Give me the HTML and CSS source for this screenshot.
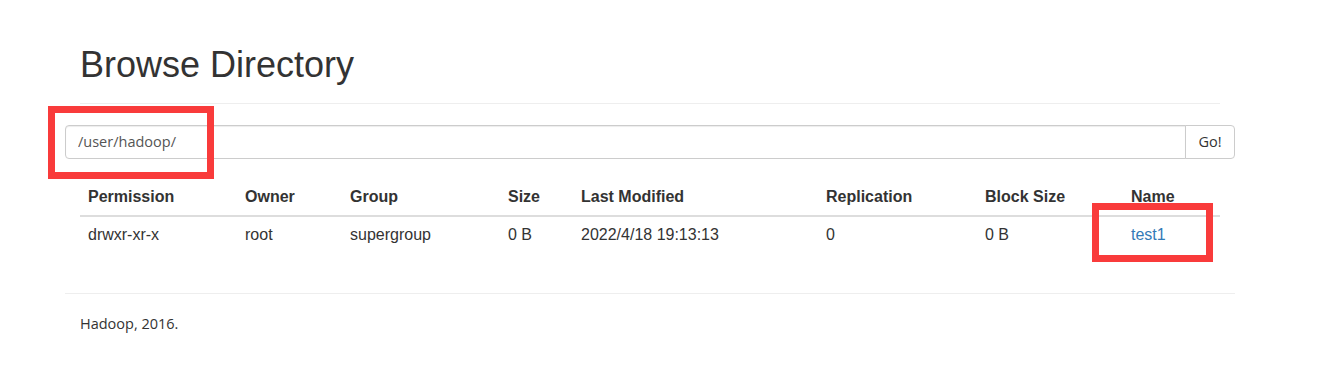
FILE: index.html
```html
<html>

<head>
    <meta charset="utf-8">
    <title>Browsing HDFS</title>
    <link rel="stylesheet" href="styles.css">
</head>

<body>
    <div class="container">
        <div class="page-header">
            <h1>Browse Directory</h1>
        </div>

        <!-- path box -->
        <form class="inputGroup" onsubmit="return false;">
            <input class="pathInput" type="text" value="/user/hadoop/" />
            <button class="goButton" type="submit">Go!</button>
        </form>

        <!-- listing -->
        <table class="table">
            <thead>
                <tr>
                    <th class="colPerm">Permission</th>
                    <th class="colOwner">Owner</th>
                    <th class="colGroup">Group</th>
                    <th class="colSize">Size</th>
                    <th class="colDate">Last Modified</th>
                    <th class="colRepl">Replication</th>
                    <th class="colBlock">Block Size</th>
                    <th class="colName">Name</th>
                </tr>
            </thead>
            <tbody>
                <tr>
                    <td>drwxr-xr-x</td>
                    <td>root</td>
                    <td>supergroup</td>
                    <td>0 B</td>
                    <td>2022/4/18 19:13:13</td>
                    <td>0</td>
                    <td>0 B</td>
                    <td><a href="#">test1</a></td>
                </tr>
            </tbody>
        </table>

        <div class="footerRule"></div>
        <p class="footerText">Hadoop, 2016.</p>
    </div>

    <!-- annotation marks -->
    <div class="mark markPath"></div>
    <div class="mark markName"></div>
</body>

</html>
```

FILE: styles.css
```css
body {
    margin: 0;
    font-family: "Liberation Sans", Arial, sans-serif;
    font-size: 14px;
    line-height: 20px;
    color: #333;
    background: #fff;
}

.container {
    width: 1170px;
    margin-left: 65px;
}

.page-header {
    margin: 45px 15px 0px 15px;
    padding-bottom: 18px;
    border-bottom: 1px solid #eee;
}

h1 {
    margin: 0;
    font-size: 36px;
    font-weight: 500;
    line-height: 1.1;
}

.inputGroup {
    display: flex;
    margin: 21px 0px 0px 0px;
    height: 34px;
}

.pathInput {
    flex: 1;
    box-sizing: border-box;
    height: 34px;
    padding: 6px 12px;
    border: 1px solid #ccc;
    border-radius: 4px 0px 0px 4px;
    font-family: "Open Sans", sans-serif;
    font-size: 14.5px;
    color: #555;
    box-shadow: inset 0 1px 1px rgba(0, 0, 0, .075);
    outline: none;
}

.goButton {
    box-sizing: border-box;
    width: 50px;
    height: 34px;
    margin-left: -1px;
    padding: 6px 0px;
    border: 1px solid #ccc;
    border-radius: 0px 4px 4px 0px;
    background: #fff;
    font-family: "Open Sans", sans-serif;
    font-size: 14.5px;
    color: #333;
}

.table {
    width: 1140px;
    margin: 20px 15px 0px 15px;
    border-collapse: collapse;
    border-spacing: 0;
}

.table th,
.table td {
    padding: 8px;
    text-align: left;
    vertical-align: bottom;
    line-height: 20px;
}

.table th {
    font-weight: bold;
    border-bottom: 2px solid #ddd;
}

.table td {
    vertical-align: top;
    border-top: 1px solid #ddd;
}

.colPerm { width: 141px; }
.colOwner { width: 89px; }
.colGroup { width: 142px; }
.colSize { width: 57px; }
.colDate { width: 229px; }
.colRepl { width: 143px; }
.colBlock { width: 130px; }
.colName { width: 81px; }

a {
    color: #337ab7;
    text-decoration: none;
}

.footerRule {
    margin-top: 40px;
    border-top: 1px solid #eee;
}

.footerText {
    margin: 20px 15px 0px 15px;
    font-family: "Open Sans", sans-serif;
    font-size: 14.5px;
}

.mark {
    position: absolute;
    box-sizing: border-box;
    border: 7px solid #f93b3b;
}

.markPath {
    left: 48px;
    top: 106px;
    width: 166px;
    height: 73px;
}

.markName {
    left: 1092px;
    top: 203px;
    width: 121px;
    height: 59px;
}
```
